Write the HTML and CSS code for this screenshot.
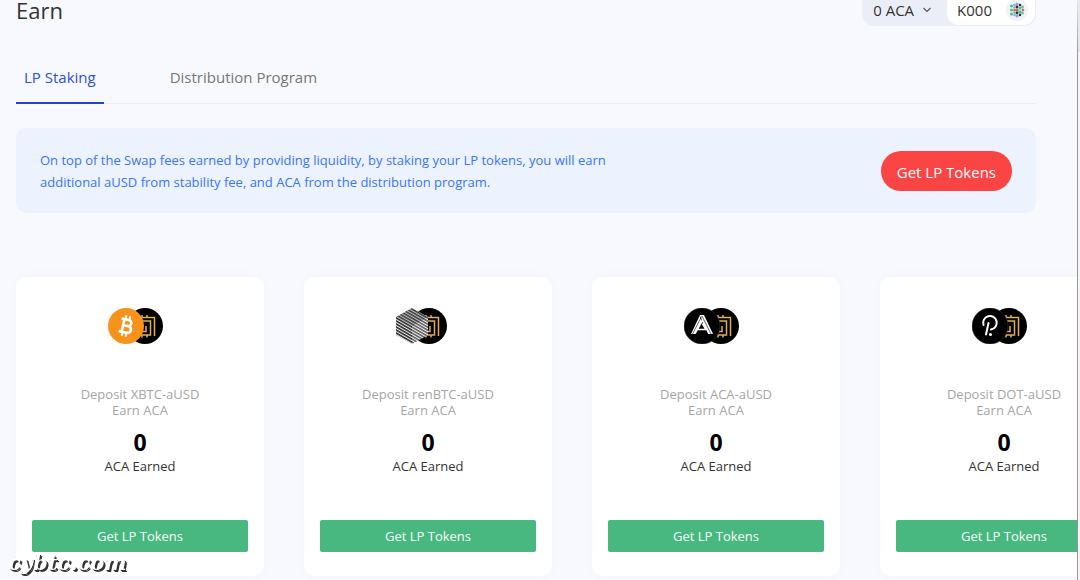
FILE: index.html
```
<!DOCTYPE html>
<html lang="en">
<head>
<meta charset="UTF-8">
<meta name="viewport" content="width=device-width, initial-scale=1.0">
<title>Earn</title>
<link rel="stylesheet" href="styles.css">
</head>
<body>
    <!-- Shared coin drawings -->
    <svg width="0" height="0" class="defs" aria-hidden="true">
        <defs>
            <pattern id="hatch" width="4" height="2.6" patternUnits="userSpaceOnUse" patternTransform="rotate(30)">
                <rect width="4" height="2.6" fill="#eee"/>
                <rect width="4" height="1.5" fill="#222"/>
            </pattern>
            <g id="ausd">
                <circle cx="18" cy="18" r="18" fill="#000"/>
                <g fill="none" stroke="#e0ac5c" stroke-width="1.5">
                    <path d="M6 9.500h21.500V28M10 13h13.500v14H10M10 23.500h9V18M15 9.500V7M20 9.500V7M15 29.500V27M20 29.500V27"/>
                </g>
            </g>
        </defs>
    </svg>

    <div class="app">
        <main class="page">
            <header class="header">
                <h1>Earn</h1>
                <div class="account">
                    <button type="button" class="balance">
                        0 ACA
                        <svg width="10" height="6" viewBox="0 0 10 6"><path d="M1.500 1L5 4.500L8.500 1" fill="none" stroke="#555" stroke-width="1.200"/></svg>
                    </button>
                    <button type="button" class="wallet">
                        K000
                        <svg width="24" height="24" viewBox="0 0 24 24">
                            <circle cx="12" cy="12" r="11" fill="#f3f3f3"/>
                            <g fill="#45bd8c"><circle cx="6.500" cy="8" r="1.500"/><circle cx="6.500" cy="12" r="1.500"/><circle cx="6.500" cy="16" r="1.500"/><circle cx="15" cy="14" r="1.700"/><circle cx="15" cy="10" r="1.500"/></g>
                            <g fill="#8ea2f0"><circle cx="12" cy="6" r="1.500"/><circle cx="9.500" cy="7" r="1.300"/><circle cx="12" cy="18" r="1.500"/><circle cx="9.500" cy="17" r="1.300"/></g>
                            <g fill="#e55a5a"><circle cx="12" cy="12" r="1.600"/><circle cx="9.500" cy="12" r="1.300"/><circle cx="18" cy="12" r="1.300"/></g>
                            <g fill="#333"><circle cx="12" cy="9" r="1.400"/><circle cx="12" cy="15" r="1.400"/><circle cx="15" cy="7" r="1.300"/><circle cx="15" cy="17" r="1.300"/></g>
                            <g fill="#55c8ab"><circle cx="17.500" cy="9" r="1.400"/><circle cx="17.500" cy="15" r="1.400"/><circle cx="9.500" cy="9.500" r="1.300"/><circle cx="9.500" cy="14.500" r="1.300"/></g>
                        </svg>
                    </button>
                </div>
            </header>

            <nav class="tabs">
                <a href="#staking" class="tab active">LP Staking</a>
                <a href="#distribution" class="tab">Distribution Program</a>
            </nav>

            <section class="notice">
                <p>On top of the Swap fees earned by providing liquidity, by staking your LP tokens, you will earn additional aUSD from stability fee, and ACA from the distribution program.</p>
                <button type="button" class="get-lp">Get LP Tokens</button>
            </section>

            <section class="cards" id="staking">
                <article class="card">
                    <svg class="coins" width="64" height="36" viewBox="0 0 64 36">
                        <use href="#ausd" x="19"/>
                        <circle cx="18" cy="18" r="18" fill="#f7931a"/>
                        <g transform="rotate(13 18 18)" fill="none" stroke="#fff">
                            <path d="M12 11.500h7.500a3.100 3.100 0 0 1 0 6.200h-4.500h5.300a3.400 3.400 0 0 1 0 6.800H12M15 11.500v13" stroke-width="2.700"/>
                            <path d="M16 7.500v4M20 7.500v4M16 24.500v4M20 24.500v4" stroke-width="2"/>
                        </g>
                    </svg>
                    <p class="pair">Deposit XBTC-aUSD<br>Earn ACA</p>
                    <strong class="amount">0</strong>
                    <span class="earned">ACA Earned</span>
                    <button type="button" class="stake">Get LP Tokens</button>
                </article>
                <article class="card">
                    <svg class="coins" width="64" height="36" viewBox="0 0 64 36">
                        <use href="#ausd" x="15"/>
                        <path d="M16 0L32 9V27L16 36L0 27V9Z" fill="url(#hatch)"/>
                        <path d="M16 0L32 9L16 18L0 9Z" fill="#666" opacity="0.350"/>
                        <path d="M16 18L32 9V27L16 36Z" fill="#fff" opacity="0.250"/>
                    </svg>
                    <p class="pair">Deposit renBTC-aUSD<br>Earn ACA</p>
                    <strong class="amount">0</strong>
                    <span class="earned">ACA Earned</span>
                    <button type="button" class="stake">Get LP Tokens</button>
                </article>
                <article class="card">
                    <svg class="coins" width="64" height="36" viewBox="0 0 64 36">
                        <use href="#ausd" x="19"/>
                        <circle cx="18" cy="18" r="18" fill="#000" stroke="#444" stroke-width="0.500"/>
                        <path d="M7 26L16 7H20L29 26H25L18 11.500L11 26Z" fill="#fff"/>
                        <path d="M12 26L19 12M24 26L16 8.500" fill="none" stroke="#000" stroke-width="0.700"/>
                        <path d="M11 25.500L18.500 12L25 26M14 21.500h8L18.500 15.500" fill="none" stroke="#fff" stroke-width="1.700"/>
                        <path d="M8.500 26L17.500 8.500M27 26L18 8" fill="none" stroke="#000" stroke-width="0.600"/>
                    </svg>
                    <p class="pair">Deposit ACA-aUSD<br>Earn ACA</p>
                    <strong class="amount">0</strong>
                    <span class="earned">ACA Earned</span>
                    <button type="button" class="stake">Get LP Tokens</button>
                </article>
                <article class="card">
                    <svg class="coins" width="64" height="36" viewBox="0 0 64 36">
                        <use href="#ausd" x="19"/>
                        <circle cx="18" cy="18" r="18" fill="#000" stroke="#444" stroke-width="0.500"/>
                        <path d="M11.500 17a6.800 6.800 0 1 1 7.500 4.500M16.500 15L14 26.500" fill="none" stroke="#fff" stroke-width="2" stroke-linecap="round"/>
                        <circle cx="18.500" cy="26.500" r="1.500" fill="#fff"/>
                    </svg>
                    <p class="pair">Deposit DOT-aUSD<br>Earn ACA</p>
                    <strong class="amount">0</strong>
                    <span class="earned">ACA Earned</span>
                    <button type="button" class="stake">Get LP Tokens</button>
                </article>
            </section>
        </main>
        <div class="rail"></div>
    </div>
    <div class="watermark">cybtc.com</div>
</body>
</html>
```
FILE: styles.css
```
* {
    box-sizing: border-box;
}

body {
    margin: 0;
    background-color: #f8f9fe;
    color: #333;
    font-family: "Open Sans", "Noto Sans", sans-serif;
    font-size: 13px;
    overflow: hidden;
}

h1, p {
    margin: 0;
}

button {
    padding: 0;
    border: none;
    background: none;
    color: inherit;
    font: inherit;
    cursor: pointer;
}

.defs {
    position: absolute;
}

.app {
    display: flex;
    min-height: 100vh;
}

.page {
    flex: 1;
    min-width: 0;
    padding: 0 41px 0 16px;
    overflow: hidden;
}

/* Edge of the window on the right */
.rail {
    width: 3px;
    border-left: 1px solid #999;
    border-top: 52px solid #e8e9ed;
    background-color: #f6f4f5;
}

.header {
    display: flex;
    justify-content: space-between;
    align-items: flex-start;
    height: 51px;
}

.header h1 {
    font-size: 22px;
    font-weight: 400;
    line-height: 20px;
}

.account {
    display: flex;
    height: 26px;
    padding: 0 1px 1px 0;
    border-radius: 0 0 12px 12px;
    background-color: #ebeef6;
    font-size: 15px;
    line-height: 20px;
}

.balance {
    display: flex;
    align-items: center;
    gap: 8px;
    padding: 0 15px 6px 11px;
}

.wallet {
    display: flex;
    align-items: center;
    gap: 13px;
    padding: 0 6px 6px 10px;
    border-radius: 0 0 12px 12px;
    background-color: #fff;
}

.tabs {
    display: flex;
    gap: 42px;
    border-bottom: 1px solid #eceef3;
}

.tab {
    padding: 15px 8px 14px;
    margin-bottom: -1px;
    border-bottom: 2px solid transparent;
    color: #777;
    font-size: 15px;
    line-height: 22px;
    text-decoration: none;
}

.tab + .tab {
    padding: 15px 24px 14px;
}

.tab.active {
    border-bottom-color: #1f45cc;
    color: #2b50dc;
}

.notice {
    display: flex;
    justify-content: space-between;
    align-items: center;
    height: 85px;
    margin-top: 24px;
    padding: 0 24px;
    border-radius: 10px;
    background-color: #ecf3ff;
}

.notice p {
    max-width: 600px;
    color: #3a74ff;
    line-height: 22px;
}

.get-lp {
    height: 40px;
    padding: 2px 16px 0;
    border-radius: 20px;
    background-color: #fb4444;
    color: #fff;
    font-size: 15px;
}

.cards {
    display: flex;
    gap: 40px;
    margin-top: 64px;
}

.card {
    display: flex;
    flex: 0 0 248px;
    flex-direction: column;
    align-items: center;
    padding: 31px 16px 24px;
    border-radius: 12px;
    background-color: #fff;
    box-shadow: 0 0 20px rgba(23, 65, 212, 0.02);
    text-align: center;
}

.pair {
    margin-top: 42px;
    color: #a6a6a6;
    line-height: 16px;
}

.amount {
    margin-top: 10px;
    color: #000;
    font-size: 23px;
    line-height: 28px;
}

.earned {
    line-height: 20px;
}

.stake {
    width: 100%;
    height: 32px;
    margin-top: 44px;
    border-radius: 2px;
    background-color: #49b880;
    color: #f2fff8;
}

/* Site mark laid over the corner */
.watermark {
    position: fixed;
    bottom: 4px;
    left: 8px;
    color: #fff;
    font-family: "DejaVu Serif", serif;
    font-size: 21px;
    font-style: italic;
    font-weight: 700;
    line-height: 26px;
    text-shadow: 1px 1px 0 #333, 2px 2px 0 #333;
}
```
